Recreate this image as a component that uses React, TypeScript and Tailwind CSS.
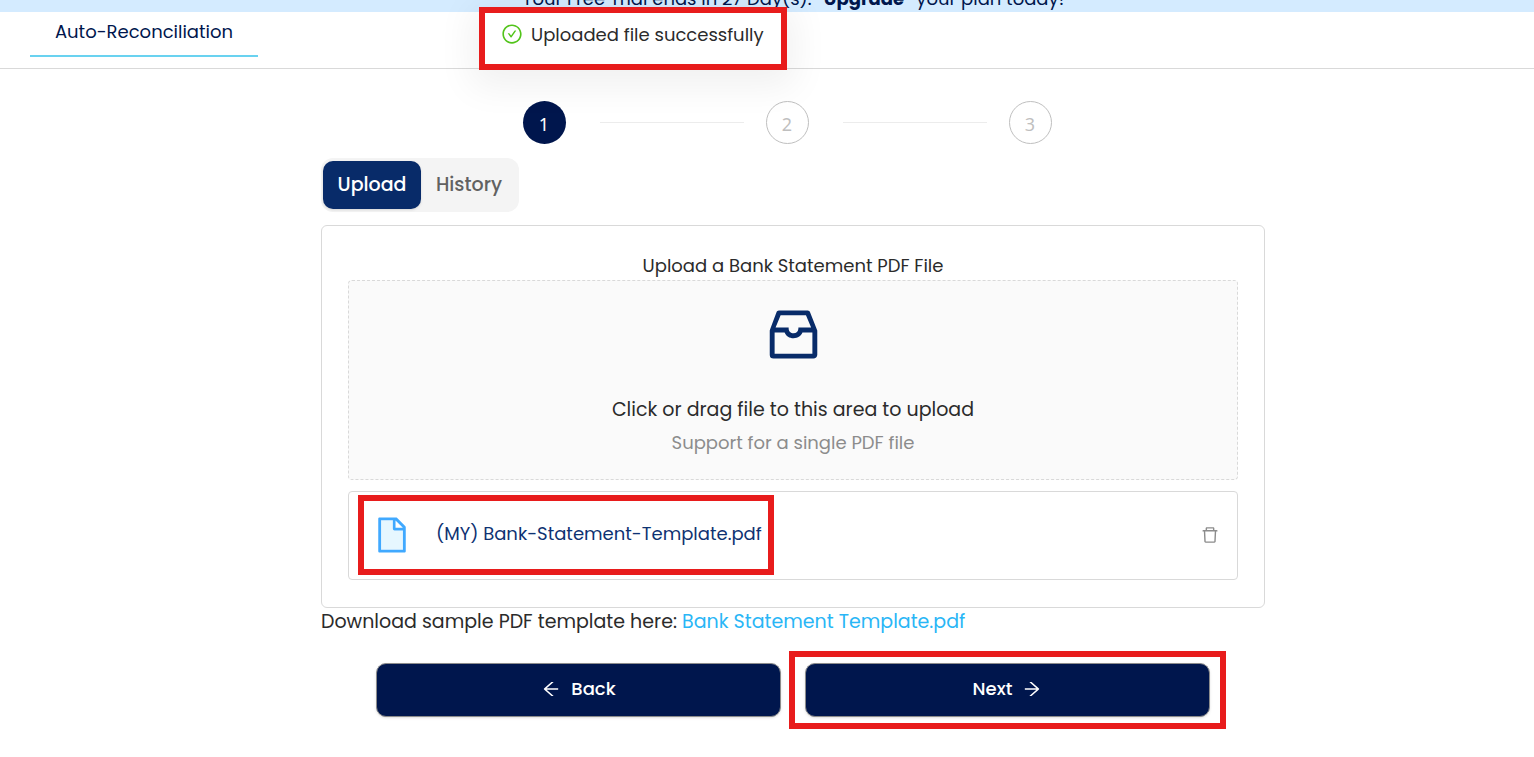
import { useState } from "react";
import {
  AiOutlineArrowLeft,
  AiOutlineArrowRight,
  AiOutlineCheckCircle,
  AiOutlineDelete,
  AiOutlineInbox,
} from "react-icons/ai";

function FileIcon() {
  return (
    <svg viewBox="0 0 1024 1024" className="size-10 shrink-0" aria-hidden="true">
      <path fill="#e6f7ff" d="M534 352V136H232v752h560V394H576a42 42 0 01-42-42z" />
      <path
        fill="#40a9ff"
        d="M854.6 288.6L639.4 73.4c-6-6-14.1-9.4-22.6-9.4H192c-17.7 0-32 14.3-32 32v832c0 17.7 14.3 32 32 32h640c17.7 0 32-14.3 32-32V311.3c0-8.5-3.4-16.7-9.4-22.7zM602 137.8L790.2 326H602V137.8zM792 888H232V136h302v216a42 42 0 0042 42h216v494z"
      />
    </svg>
  );
}

function Banner() {
  return (
    <div className="flex h-3 items-end justify-center overflow-hidden bg-[#d4ebff] pb-px pl-[52px] text-lg leading-6 text-[#00164d]">
      <p className="whitespace-pre">
        Your Free Trial ends in 27 Day(s). <b>"Upgrade"</b> your plan today!
      </p>
    </div>
  );
}

function Header() {
  return (
    <header className="flex h-[57px] items-start border-b border-[#d9d9d9] pl-[30px]">
      <a
        href="#auto-reconciliation"
        className="flex h-[45px] w-[228px] justify-center border-b-2 border-[#69d2f0] pt-2 text-lg leading-6 text-[#00164d]"
      >
        Auto-Reconciliation
      </a>
    </header>
  );
}

function Toast() {
  return (
    <div
      role="status"
      className="absolute top-[7px] left-[479px] flex h-[63px] w-[308px] gap-2 border-6 border-[#e81c1c] bg-white pt-2.5 pl-4 text-lg leading-6 text-[#2b2b2b] shadow-[0_9px_36px_8px_rgba(0,0,0,0.06)]"
    >
      <AiOutlineCheckCircle className="size-[22px] shrink-0 text-[#52c41a]" />
      <span className="whitespace-nowrap">Uploaded file successfully</span>
    </div>
  );
}

function Steps({ current }: { current: number }) {
  return (
    <div className="flex justify-center pr-3">
      <ol className="flex w-full max-w-[529px] items-center">
        {[1, 2, 3].map((n) => (
          <li key={n} className={n === 1 ? "flex items-center" : "flex flex-1 items-center"}>
            {n > 1 && <span className="mr-[22px] ml-[34px] h-px flex-1 bg-[#ececec]" />}
            <span
              className={
                n === current
                  ? "flex size-[43px] items-center justify-center rounded-full bg-[#00164d] pt-0.5 font-['Noto_Sans',sans-serif] text-lg text-white"
                  : "flex size-[43px] items-center justify-center rounded-full border border-[#bfbfbf] pt-0.5 font-['Noto_Sans',sans-serif] text-lg text-[#bfbfbf]"
              }
            >
              {n}
            </span>
          </li>
        ))}
      </ol>
    </div>
  );
}

export default function App() {
  const [tab, setTab] = useState("Upload");
  return (
    <div className="relative bg-white font-[Poppins,Inter,sans-serif] text-[#2b2b2b]">
      <Banner />
      <Header />
      <Toast />
      <main className="pt-8 pb-10 pl-[52px]">
        <div className="mx-auto max-w-[944px]">
          <Steps current={1} />

          <div className="mt-3.5 inline-flex h-[54px] rounded-xl bg-[#f4f4f4] px-0.5 py-[3px]">
            {["Upload", "History"].map((name) => (
              <button
                key={name}
                type="button"
                onClick={() => setTab(name)}
                className={
                  tab === name
                    ? "w-[98px] rounded-[10px] bg-[#082b69] text-[19px] font-medium text-white shadow-sm"
                    : "w-24 rounded-[10px] text-[19px] font-medium text-[#616161]"
                }
              >
                {name}
              </button>
            ))}
          </div>

          <section className="mt-[13px] rounded-md border border-[#d9d9d9] px-[26px] pt-[27px] pb-[27px]">
            <h1 className="h-[27px] text-center text-lg leading-[26px]">Upload a Bank Statement PDF File</h1>
            <button
              type="button"
              className="flex h-[200px] w-full flex-col items-center rounded-sm border border-dashed border-[#d9d9d9] bg-[#fafafa] pt-[21px]"
            >
              <AiOutlineInbox className="size-[65px] text-[#082b69]" />
              <span className="mt-[29px] text-[19px] leading-7">Click or drag file to this area to upload</span>
              <span className="mt-[5px] text-lg leading-7 text-[#8c8c8c]">Support for a single PDF file</span>
            </button>

            <div className="mt-[11px] flex h-[89px] items-center justify-between rounded-sm border border-[#d9d9d9] pr-[17px] pl-[9px]">
              <div className="mb-px flex h-20 w-[416px] items-center border-6 border-[#e81c1c] pl-2">
                <FileIcon />
                <a href="#statement" className="ml-6 pb-0.5 text-lg whitespace-nowrap text-[#0e3272]">
                  (MY) Bank-Statement-Template.pdf
                </a>
              </div>
              <button type="button" aria-label="Remove file" className="pb-0.5 text-[#8c8c8c]">
                <AiOutlineDelete className="size-5" />
              </button>
            </div>
          </section>

          <p className="text-[19px] leading-7">
            Download sample PDF template here:{" "}
            <a href="#template" className="text-[#29b6f6]">
              Bank Statement Template.pdf
            </a>
          </p>

          <div className="mt-[27px] grid grid-cols-2 gap-6 px-[55px]">
            <button
              type="button"
              className="flex h-[54px] items-center justify-center gap-2.5 rounded-[10px] border border-[#8c8c8c] bg-[#00164d] pb-0.5 text-lg font-medium text-white shadow-sm"
            >
              <AiOutlineArrowLeft className="size-5" />
              Back
            </button>
            <div className="relative flex">
              <button
                type="button"
                className="flex h-[54px] flex-1 items-center justify-center gap-2.5 rounded-[10px] border border-[#8c8c8c] bg-[#00164d] pb-0.5 text-lg font-medium text-white shadow-sm"
              >
                Next
                <AiOutlineArrowRight className="size-5" />
              </button>
              <span className="pointer-events-none absolute -inset-x-4 -inset-y-3 border-6 border-[#e81c1c]" />
            </div>
          </div>
        </div>
      </main>
    </div>
  );
}
